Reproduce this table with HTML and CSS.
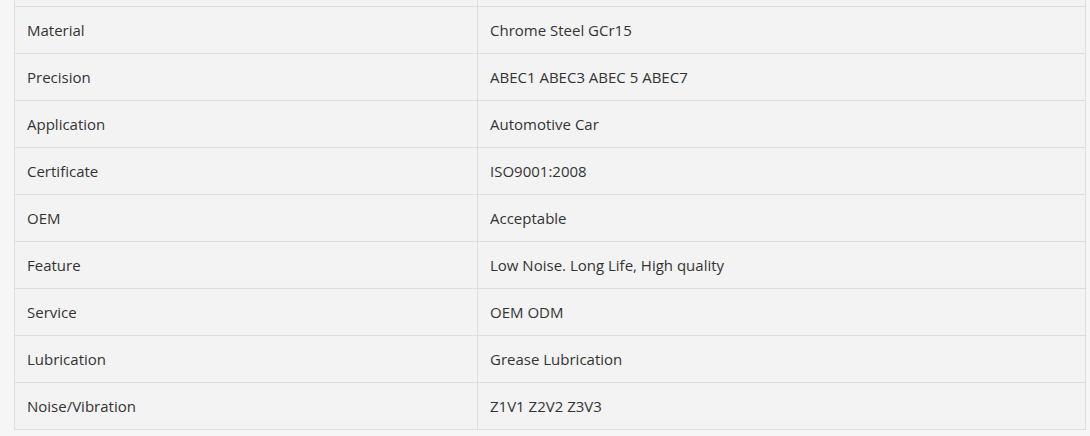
FILE: index.html
```html
<!DOCTYPE html>
<html>
<head>
<meta charset="utf-8">
<link rel="stylesheet" href="styles.css">
</head>
<body>
<div class="wrap">
<table class="spec">
<colgroup><col class="c1"><col class="c2"></colgroup>
<tbody>
<tr class="cut"><td>&nbsp;</td><td>&nbsp;</td></tr>
<tr><td>Material</td><td>Chrome Steel GCr15</td></tr>
<tr><td>Precision</td><td>ABEC1 ABEC3 ABEC 5 ABEC7</td></tr>
<tr><td>Application</td><td>Automotive Car</td></tr>
<tr><td>Certificate</td><td>ISO9001:2008</td></tr>
<tr><td>OEM</td><td>Acceptable</td></tr>
<tr><td>Feature</td><td>Low Noise. Long Life, High quality</td></tr>
<tr><td>Service</td><td>OEM ODM</td></tr>
<tr><td>Lubrication</td><td>Grease Lubrication</td></tr>
<tr><td>Noise/Vibration</td><td>Z1V1 Z2V2 Z3V3</td></tr>
</tbody>
</table>
</div>
</body>
</html>
```
FILE: styles.css
```css
html, body {
  margin: 0;
  padding: 0;
  background: #f6f6f6;
  overflow: hidden;
}
.wrap {
  padding-left: 14px;
  margin-top: -41px;
}
.spec {
  width: 1072px;
  border-collapse: collapse;
  background: #f3f3f3;
  font-family: "Open Sans", "Noto Sans", sans-serif;
  font-size: 15px;
  color: #333;
}
.c1 { width: 463px; }
.spec td {
  height: 47px;
  box-sizing: border-box;
  border: 1px solid #dedede;
  padding: 0 12px;
  vertical-align: middle;
}
```
